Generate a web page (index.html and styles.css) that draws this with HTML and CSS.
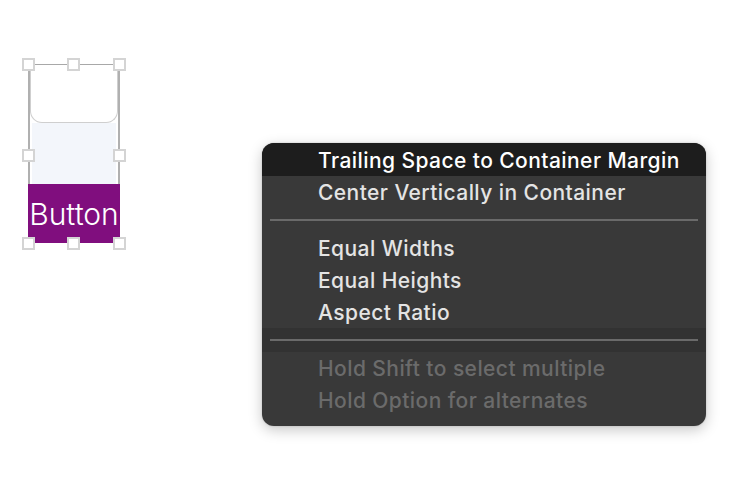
FILE: index.html
```html
<!DOCTYPE html>
<html lang="en">
<head>
    <meta charset="UTF-8">
    <title>Constraints Menu</title>
    <link rel="stylesheet" href="styles.css">
</head>
<body>
    <div class="canvas">
        <!-- selected view on the storyboard -->
        <div class="view">
            <div class="view-top"></div>
            <div class="view-mid"></div>
            <div class="view-btn">Button</div>

            <span class="handle h-tl"></span>
            <span class="handle h-tm"></span>
            <span class="handle h-tr"></span>
            <span class="handle h-ml"></span>
            <span class="handle h-mr"></span>
            <span class="handle h-bl"></span>
            <span class="handle h-bm"></span>
            <span class="handle h-br"></span>
        </div>

        <!-- context menu -->
        <ul class="menu">
            <li class="item first active">Trailing Space to Container Margin</li>
            <li class="item">Center Vertically in Container</li>
            <li class="sep"></li>
            <li class="item">Equal Widths</li>
            <li class="item">Equal Heights</li>
            <li class="item">Aspect Ratio</li>
            <li class="sep dim"></li>
            <li class="item disabled">Hold Shift to select multiple</li>
            <li class="item disabled">Hold Option for alternates</li>
        </ul>
    </div>
</body>
</html>
```

FILE: styles.css
```css
body {
    margin: 0;
    background: #ffffff;
    font-family: Inter, "Liberation Sans", Arial, sans-serif;
}

.canvas {
    position: relative;
    width: 746px;
    height: 478px;
    overflow: hidden;
}

.view {
    position: absolute;
    left: 28px;
    top: 64px;
    width: 92px;
    height: 179px;
    box-sizing: border-box;
    border-top: 1px solid #a8a8a8;
    border-left: 2px solid #b0b0b0;
    border-right: 2px solid #b0b0b0;
    display: flex;
    flex-direction: column;
}

.view-top {
    height: 58px;
    background: #ffffff;
    border: 1px solid #cfcfcf;
    border-top: none;
    border-radius: 0 0 12px 12px;
    box-sizing: border-box;
}

.view-mid {
    flex: 1;
    margin: 0 2px;
    background: #f3f6fb;
}

.view-btn {
    height: 59px;
    margin: 0 -2px;
    background: #800e7e;
    color: #ffffff;
    font-size: 30px;
    font-weight: 300;
    display: flex;
    align-items: center;
    justify-content: center;
}

.handle {
    position: absolute;
    width: 13px;
    height: 13px;
    box-sizing: border-box;
    background: #ffffff;
    border: 2px solid #d4d4d4;
}

.h-tl { left: -8px; top: -7px; }
.h-tm { left: 37px; top: -7px; }
.h-tr { left: 83px; top: -7px; }
.h-ml { left: -8px; top: 84px; }
.h-mr { left: 83px; top: 84px; }
.h-bl { left: -8px; top: 172px; }
.h-bm { left: 37px; top: 172px; }
.h-br { left: 83px; top: 172px; }

.menu {
    position: absolute;
    left: 262px;
    top: 143px;
    width: 444px;
    height: 283px;
    margin: 0;
    padding: 0;
    list-style: none;
    background: #393939;
    border-radius: 12px;
    overflow: hidden;
    box-shadow: 0 4px 14px rgba(0, 0, 0, 0.22), 0 0 2px rgba(0, 0, 0, 0.2);
}

.item {
    height: 32px;
    line-height: 34px;
    padding-left: 56px;
    font-size: 21px;
    font-weight: 500;
    letter-spacing: 0.43px;
    color: #e4e4e4;
    white-space: nowrap;
}

.item.first {
    height: 33px;
    line-height: 35px;
}

.item.active {
    background: #1d1d1d;
    color: #ffffff;
}

.item.disabled {
    color: #6b6b6b;
}

.sep {
    height: 24px;
    display: flex;
    align-items: center;
    padding: 0 8px;
}

.sep::before {
    content: "";
    flex: 1;
    height: 2px;
    background: #6a6a6a;
}

.sep.dim {
    background: #323232;
}
```
